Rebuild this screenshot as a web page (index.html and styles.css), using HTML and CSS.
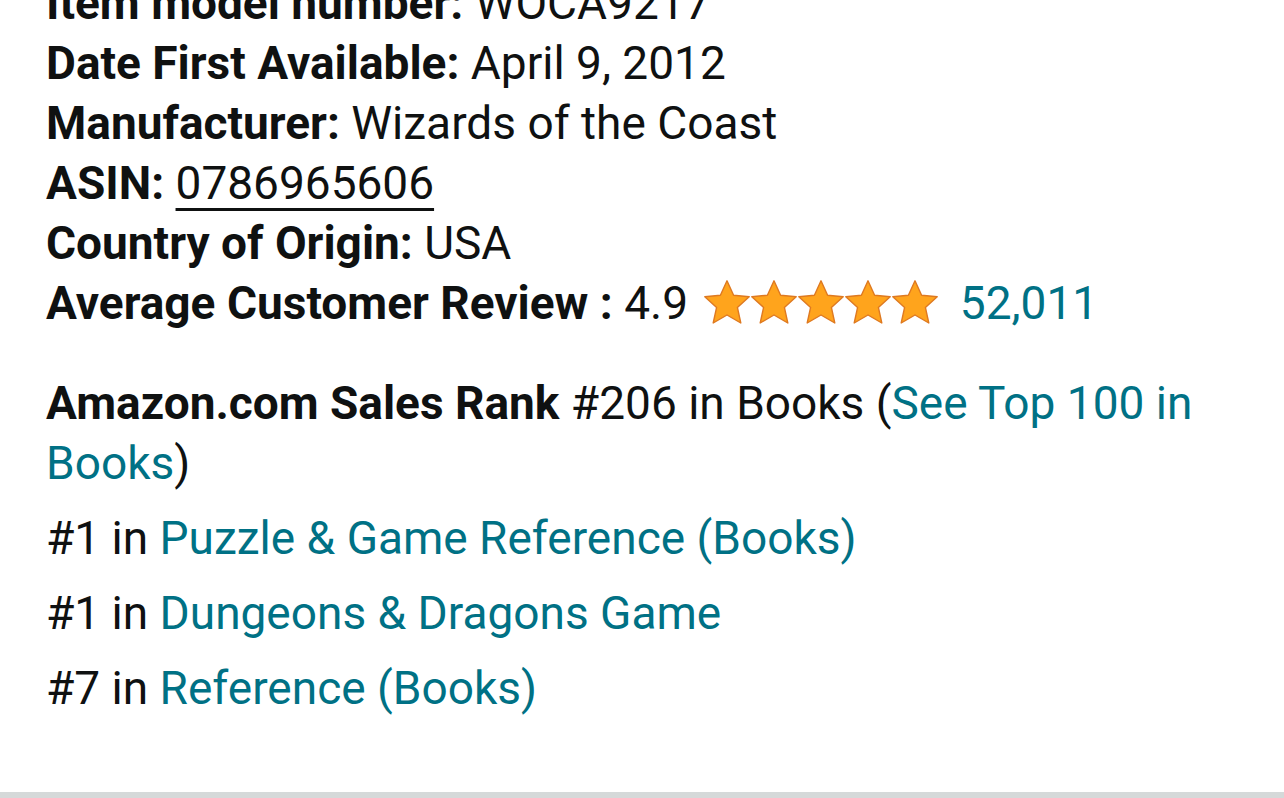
FILE: index.html
```html
<!DOCTYPE html>
<html>
<head>
<meta charset="utf-8">
<link rel="stylesheet" href="styles.css">
</head>
<body>
<div class="details">
  <div class="row"><b>Item model number:</b> WOCA9217</div>
  <div class="row"><b>Date First Available:</b> April 9, 2012</div>
  <div class="row"><b>Manufacturer:</b> Wizards of the Coast</div>
  <div class="row"><b>ASIN:</b> <span class="asin">0786965606</span></div>
  <div class="row"><b>Country of Origin:</b> USA</div>
  <div class="row review"><b>Average Customer Review :</b> 4.9
    <span class="stars">
      <svg viewBox="0 0 24 24" class="star"><path d="M12 .9l3.3 7.2 7.8.8-5.9 5.3 1.7 7.8L12 18l-6.9 4 1.7-7.8L.9 8.9l7.8-.8z"/></svg><svg viewBox="0 0 24 24" class="star"><path d="M12 .9l3.3 7.2 7.8.8-5.9 5.3 1.7 7.8L12 18l-6.9 4 1.7-7.8L.9 8.9l7.8-.8z"/></svg><svg viewBox="0 0 24 24" class="star"><path d="M12 .9l3.3 7.2 7.8.8-5.9 5.3 1.7 7.8L12 18l-6.9 4 1.7-7.8L.9 8.9l7.8-.8z"/></svg><svg viewBox="0 0 24 24" class="star"><path d="M12 .9l3.3 7.2 7.8.8-5.9 5.3 1.7 7.8L12 18l-6.9 4 1.7-7.8L.9 8.9l7.8-.8z"/></svg><svg viewBox="0 0 24 24" class="star"><path d="M12 .9l3.3 7.2 7.8.8-5.9 5.3 1.7 7.8L12 18l-6.9 4 1.7-7.8L.9 8.9l7.8-.8z"/></svg>
    </span>
    <a class="link count" href="#">52,011</a>
  </div>
  <div class="rank"><b>Amazon.com Sales Rank</b> #206 in Books (<a class="link" href="#">See Top 100 in Books</a>)</div>
  <ul class="subranks">
    <li>#1 in <a class="link" href="#">Puzzle &amp; Game Reference (Books)</a></li>
    <li>#1 in <a class="link" href="#">Dungeons &amp; Dragons Game</a></li>
    <li>#7 in <a class="link" href="#">Reference (Books)</a></li>
  </ul>
</div>
<div class="footer-bar"></div>
</body>
</html>
```
FILE: styles.css
```css
html, body {
  margin: 0;
  padding: 0;
  background: #fff;
  height: 798px;
  overflow: hidden;
}
body {
  font-family: Roboto, "Liberation Sans", sans-serif;
  color: #0f1111;
  font-size: 46px;
  display: flex;
  flex-direction: column;
}
.details {
  padding: 0 46px;
  margin-top: -27px;
  flex: 1;
}
.row {
  line-height: 60px;
  white-space: nowrap;
}
.row b, .rank b {
  font-weight: 700;
}
.asin {
  text-decoration: underline;
  text-decoration-thickness: 3px;
  text-underline-offset: 9px;
}
.stars {
  display: inline-flex;
  vertical-align: -8px;
  margin: 0 10px 0 4px;
}
.star {
  width: 48px;
  height: 48px;
  margin-right: -1px;
}
.star path {
  fill: #ffa41c;
  stroke: #de7921;
  stroke-width: 0.7;
  stroke-linejoin: round;
}
.link {
  color: #007185;
  text-decoration: none;
}
.rank {
  margin-top: 40px;
  line-height: 60px;
}
.subranks {
  list-style: none;
  margin: 15px 0 0;
  padding: 0;
}
.subranks li {
  line-height: 60px;
  margin-bottom: 15px;
}
.footer-bar {
  height: 6px;
  background: #d5d9d9;
}
```
